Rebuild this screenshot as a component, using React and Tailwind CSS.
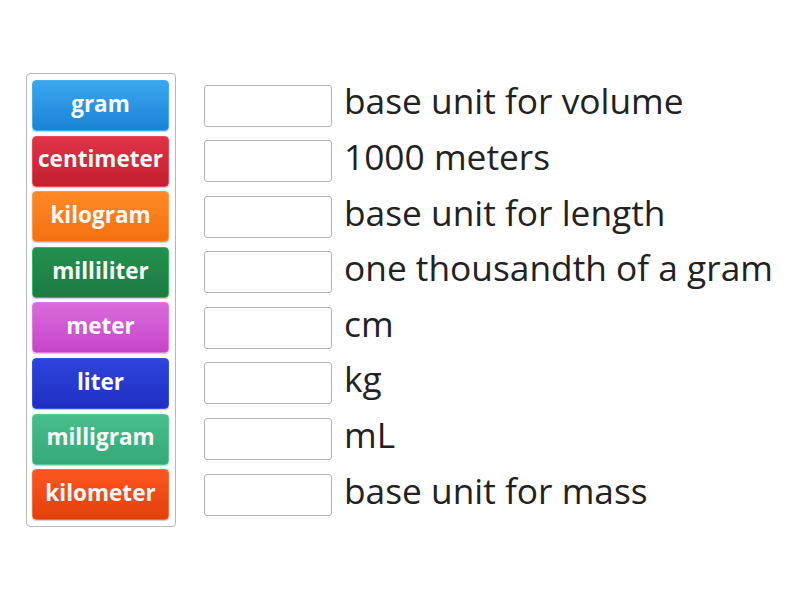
const tiles = [
  { label: "gram", cls: "bg-gradient-to-b from-[#3aa6ee] to-[#1b83d6] border-[#45aef0]" },
  { label: "centimeter", cls: "bg-gradient-to-b from-[#e03347] to-[#c21f30] border-[#e84a5c]" },
  { label: "kilogram", cls: "bg-gradient-to-b from-[#ff8a26] to-[#f47010] border-[#ff9a40]" },
  { label: "milliliter", cls: "bg-gradient-to-b from-[#23914f] to-[#1c7a41] border-[#2dbb60]" },
  { label: "meter", cls: "bg-gradient-to-b from-[#da6bdc] to-[#c544c8] border-[#e07ae2]" },
  { label: "liter", cls: "bg-gradient-to-b from-[#2e44dc] to-[#1f2fc2] border-[#3a50e4]" },
  { label: "milligram", cls: "bg-gradient-to-b from-[#47bf8c] to-[#35a877] border-[#55c898]" },
  { label: "kilometer", cls: "bg-gradient-to-b from-[#ff5620] to-[#e2400a] border-[#ff6a36]" },
];

const clues = [
  "base unit for volume",
  "1000 meters",
  "base unit for length",
  "one thousandth of a gram",
  "cm",
  "kg",
  "mL",
  "base unit for mass",
];

export default function App() {
  return (
    <div
      className="w-[800px] h-[600px] bg-white flex items-start pl-[26px] pt-[73px]"
      style={{ fontFamily: '"Open Sans", sans-serif' }}
    >
      <div className="w-[150px] border border-[#b8b8b8] rounded-[4px] pl-[5px] pr-[6px] py-[6px] flex flex-col gap-[4.6px]">
        {tiles.map((t) => (
          <div
            key={t.label}
            className={`h-[51px] rounded-[4px] border flex items-center justify-center pb-[3px] text-[#fbfbfb] font-bold text-[22.5px] leading-none shadow-[0_1px_1px_rgba(0,0,0,0.2)] ${t.cls}`}
          >
            {t.label}
          </div>
        ))}
      </div>
      <div className="ml-[28px] pt-[7px] flex flex-col gap-[4.6px]">
        {clues.map((c, i) => (
          <div key={i} className="h-[51px] flex items-center">
            <div className="w-[128px] h-[42px] border border-[#b4b4b4] rounded-[3px] bg-white" />
            <span className="ml-[12px] pb-[9px] text-[35.3px] text-[#222] leading-none whitespace-nowrap">
              {c}
            </span>
          </div>
        ))}
      </div>
    </div>
  );
}
